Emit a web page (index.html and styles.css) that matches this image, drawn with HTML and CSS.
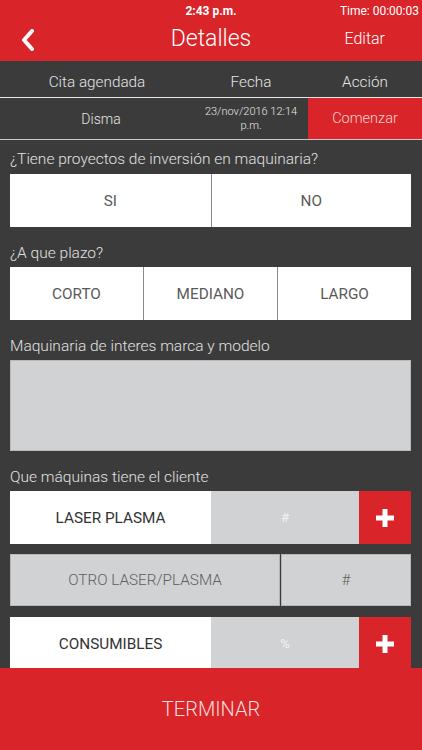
FILE: index.html
```html
<!DOCTYPE html>
<html lang="es">
<head>
<meta charset="utf-8">
<title>Detalles</title>
<link rel="stylesheet" href="styles.css">
</head>
<body>
<div class="app">
  <header class="topbar">
    <div class="status">
      <span></span>
      <span class="clock">2:43 p.m.</span>
      <span class="timer">Time: 00:00:03</span>
    </div>
    <div class="nav">
      <span class="back">
        <svg width="14" height="22" viewBox="0 0 14 22"><path d="M11 2 L3 11 L11 20" fill="none" stroke="#fff" stroke-width="4" stroke-linecap="round" stroke-linejoin="round"/></svg>
      </span>
      <span class="title">Detalles</span>
      <span class="edit">Editar</span>
    </div>
  </header>

  <div class="thead">
    <span>Cita agendada</span>
    <span>Fecha</span>
    <span>Acción</span>
  </div>
  <div class="trow">
    <span class="cell name-cell">Disma</span>
    <span class="cell date">23/nov/2016 12:14<br>p.m.</span>
    <span class="cell action">Comenzar</span>
  </div>

  <main class="content">
    <p class="label">¿Tiene proyectos de inversión en maquinaria?</p>
    <div class="choices two">
      <span class="opt">SI</span>
      <span class="opt">NO</span>
    </div>

    <p class="label">¿A que plazo?</p>
    <div class="choices three">
      <span class="opt">CORTO</span>
      <span class="opt">MEDIANO</span>
      <span class="opt">LARGO</span>
    </div>

    <p class="label">Maquinaria de interes marca y modelo</p>
    <div class="textarea"></div>

    <p class="label">Que máquinas tiene el cliente</p>
    <div class="machine">
      <span class="name">LASER PLASMA</span>
      <span class="qty">#</span>
      <span class="add"><svg width="18" height="18" viewBox="0 0 18 18"><rect x="6.5" y="0" width="5" height="18" fill="#fff"/><rect x="0" y="6.5" width="18" height="5" fill="#fff"/></svg></span>
    </div>
    <div class="other">
      <span class="oname">OTRO LASER/PLASMA</span>
      <span class="oqty">#</span>
    </div>
    <div class="machine last">
      <span class="name">CONSUMIBLES</span>
      <span class="qty">%</span>
      <span class="add"><svg width="18" height="18" viewBox="0 0 18 18"><rect x="6.5" y="0" width="5" height="18" fill="#fff"/><rect x="0" y="6.5" width="18" height="5" fill="#fff"/></svg></span>
    </div>
  </main>

  <footer class="footer">TERMINAR</footer>
</div>
</body>
</html>
```

FILE: styles.css
```css
* { box-sizing: border-box; }
html, body { margin: 0; padding: 0; }
body {
  width: 422px;
  height: 750px;
  overflow: hidden;
  background: #3b3b3b;
  font-family: Roboto, "Noto Sans", sans-serif;
}
.app {
  height: 750px;
  display: flex;
  flex-direction: column;
}
.topbar {
  background: #d9252a;
  height: 61px;
  color: #fff;
  flex: none;
}
.status {
  height: 20px;
  display: grid;
  grid-template-columns: 1fr auto 1fr;
  align-items: center;
  font-size: 12px;
  padding-top: 2px;
}
.clock { font-weight: 700; }
.timer { justify-self: end; padding-right: 3px; }
.nav {
  height: 41px;
  display: grid;
  grid-template-columns: 1fr auto 1fr;
  align-items: center;
  padding-bottom: 4px;
}
.back { padding-left: 21px; display: flex; align-items: center; padding-top: 2px; }
.title { font-size: 23px; font-weight: 300; }
.edit { justify-self: end; padding-right: 37px; font-size: 16px; font-weight: 300; }

.thead, .trow {
  display: grid;
  grid-template-columns: 194px 114px 114px;
  flex: none;
}
.thead {
  height: 37px;
  border-bottom: 1.5px solid #e8e8e8;
  align-items: center;
  color: #e6e6e6;
  font-size: 15.3px;
  font-weight: 300;
  text-align: center;
  padding-top: 6px;
}
.trow {
  height: 42px;
  border-bottom: 1.5px solid #c8c8c8;
  color: #e6e6e6;
}
.cell {
  display: flex;
  align-items: center;
  justify-content: center;
  text-align: center;
  font-size: 14px;
  font-weight: 300;
}
.name-cell { padding-left: 8px; }
.date { font-size: 11px; line-height: 14px; }
.action { background: #d9252a; color: #f6d2d2; font-size: 14.5px; }

.content {
  flex: 1;
  overflow: hidden;
  padding: 9px 11px 0 10px;
  display: flex;
  flex-direction: column;
}
.label {
  margin: 16px 0 4px;
  height: 20px;
  line-height: 20px;
  font-size: 15.5px;
  font-weight: 300;
  color: #e2e2e2;
  flex: none;
}
.label:first-child { margin-top: 0; margin-bottom: 5px; }
.choices {
  height: 53px;
  display: grid;
  background: #fff;
  flex: none;
}
.choices.two { grid-template-columns: 1fr 1fr; }
.choices.three { grid-template-columns: 133px 134px 1fr; }
.opt {
  display: flex;
  align-items: center;
  justify-content: center;
  font-size: 15.3px;
  color: #5a5a5a;
  border-left: 1px solid #8a8a8a;
}
.opt:first-child { border-left: none; }
.textarea {
  height: 91px;
  background: #d1d2d4;
  border: 1px solid #b9b9b9;
  flex: none;
}
.machine {
  height: 53px;
  display: grid;
  grid-template-columns: 201px 148px 1fr;
  flex: none;
}
.machine.last { margin-top: 11px; height: 60px; }
.name {
  background: #fff;
  display: flex;
  align-items: center;
  justify-content: center;
  font-size: 15.3px;
  color: #333;
}
.machine.last .name, .machine.last .qty, .machine.last .add { padding-bottom: 7px; }
.qty {
  background: #d1d2d4;
  display: flex;
  align-items: center;
  justify-content: center;
  font-size: 13px;
  color: #f3f3f3;
}
.add {
  background: #d9252a;
  display: flex;
  align-items: center;
  justify-content: center;
}
.other {
  margin-top: 10px;
  height: 52px;
  display: grid;
  grid-template-columns: 270px 1fr;
  gap: 1px;
  flex: none;
}
.oname, .oqty {
  background: #d1d2d4;
  border: 1px solid #b5b5b5;
  display: flex;
  align-items: center;
  justify-content: center;
  font-size: 15.3px;
  font-weight: 300;
  color: #5f5f5f;
}
.footer {
  flex: none;
  height: 82px;
  background: #d9252a;
  color: #f6dcdc;
  display: flex;
  align-items: center;
  justify-content: center;
  font-size: 20px;
  font-weight: 300;
}
```
